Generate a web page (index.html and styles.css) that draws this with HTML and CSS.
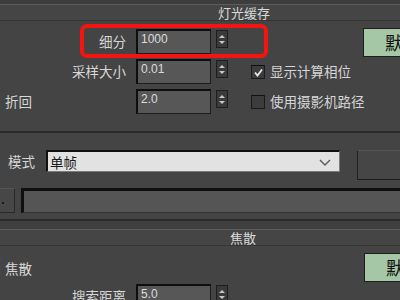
FILE: index.html
```html
<!DOCTYPE html>
<html lang="zh-CN">
<head>
<meta charset="utf-8">
<title>灯光缓存</title>
<link rel="stylesheet" href="styles.css">
</head>
<body>
<div class="topband"></div>
<div class="rhead"><span class="rtitle t1">灯光缓存</span></div>
<section class="panel lc">
  <div class="row">
    <label class="lbl">细分</label>
    <div class="num">1000</div>
    <div class="spin"><i class="up"></i><i class="dn"></i></div>
    <div class="green">默认</div>
  </div>
  <div class="row">
    <label class="lbl">采样大小</label>
    <div class="num">0.01</div>
    <div class="spin"><i class="up"></i><i class="dn"></i></div>
    <div class="chk on"><svg viewBox="0 0 11 11" width="11" height="11"><path d="M2 5.5 L4.5 8.5 L9 2.5" fill="none" stroke="#e8e8e8" stroke-width="1.8"/></svg></div>
    <span class="chktxt">显示计算相位</span>
  </div>
  <div class="row">
    <label class="lbl left">折回</label>
    <div class="num">2.0</div>
    <div class="spin"><i class="up"></i><i class="dn"></i></div>
    <div class="chk"></div>
    <span class="chktxt">使用摄影机路径</span>
  </div>
  <div class="highlight"></div>
</section>
<div class="sep"></div>
<section class="panel mode">
  <div class="mrow">
    <label class="mlbl">模式</label>
    <div class="drop"><span>单帧</span><svg class="chev" viewBox="0 0 12 7" width="12" height="7"><path d="M1 1 L6 6 L11 1" fill="none" stroke="#5a5a5a" stroke-width="1.4"/></svg></div>
    <div class="btn"></div>
  </div>
  <div class="frow">
    <div class="sbtn"><i></i></div>
    <div class="field"></div>
  </div>
</section>
<div class="sep"></div>
<div class="gapband"></div>
<div class="rhead"><span class="rtitle t2">焦散</span></div>
<section class="panel caus">
  <div class="crow">
    <label class="clbl">焦散</label>
    <div class="green g2">默认</div>
  </div>
  <div class="row">
    <label class="lbl">搜索距离</label>
    <div class="num">5.0</div>
    <div class="spin"><i class="up"></i><i class="dn"></i></div>
  </div>
</section>
</body>
</html>
```

FILE: styles.css
```css
html, body {
  margin: 0;
  padding: 0;
}
body {
  width: 400px;
  height: 300px;
  overflow: hidden;
  background: #444444;
  font-family: "Noto Sans CJK SC", "Noto Sans", sans-serif;
  color: #d6d6d6;
}
.topband {
  height: 4px;
  background: #3d3d3d;
}
.rhead {
  height: 15px;
  border-top: 1px solid #5c5c5c;
  border-bottom: 1px solid #353535;
  background: #454545;
  font-size: 13px;
  line-height: 15px;
  white-space: nowrap;
}
.rtitle {
  display: inline-block;
  color: #dadada;
}
.t1 { padding-left: 218px; }
.t2 { padding-left: 230px; }
.panel {
  position: relative;
  white-space: nowrap;
}
.lc {
  padding-top: 8px;
  padding-bottom: 12px;
}
.row {
  display: flex;
  align-items: flex-start;
  height: 25px;
  margin-bottom: 5px;
}
.lbl {
  width: 126px;
  flex: none;
  text-align: right;
  font-size: 13.5px;
  line-height: 25px;
  margin-right: 10px;
}
.lbl.left {
  text-align: left;
  padding-left: 5px;
  width: 121px;
}
.num {
  box-sizing: border-box;
  width: 75px;
  height: 25px;
  flex: none;
  background: #575757;
  border: 1px solid #1c1c1c;
  border-left: 2px solid #0e0e0e;
  border-top: 2px solid #0e0e0e;
  font-family: "Liberation Sans", Arial, sans-serif;
  font-size: 12px;
  line-height: 16px;
  padding-left: 3px;
  color: #dcdcdc;
}
.spin {
  box-sizing: border-box;
  width: 12px;
  height: 18px;
  margin-left: 5px;
  margin-top: 1px;
  flex: none;
  background: #3a3a3a;
  border: 1px solid #1e1e1e;
  display: flex;
  flex-direction: column;
  align-items: center;
  justify-content: space-around;
  padding: 2px 0;
}
.spin i {
  display: block;
  width: 0;
  height: 0;
  border-left: 3px solid transparent;
  border-right: 3px solid transparent;
}
.spin .up { border-bottom: 3px solid #c8c8c8; }
.spin .dn { border-top: 3px solid #c8c8c8; }
.chk {
  box-sizing: border-box;
  width: 14px;
  height: 14px;
  margin-left: 23px;
  margin-top: 6px;
  flex: none;
  background: #3c3c3c;
  border: 1px solid #1a1a1a;
  border-top-color: #111;
  display: flex;
  align-items: center;
  justify-content: center;
}
.chktxt {
  margin-left: 5px;
  font-size: 13.5px;
  line-height: 25px;
}
.green {
  box-sizing: border-box;
  height: 29px;
  width: 60px;
  flex: none;
  margin-left: 135px;
  margin-top: -1px;
  margin-bottom: -3px;
  background: #a6c7a6;
  border: 1px solid #1e1e1e;
  border-right: none;
  color: #111;
  font-size: 18px;
  line-height: 26px;
  padding-left: 21px;
  overflow: hidden;
}
.highlight {
  position: absolute;
  left: 80px;
  top: 3px;
  width: 188px;
  height: 34px;
  box-sizing: border-box;
  border: 4px solid #f5140f;
  border-radius: 7px;
}
.sep {
  height: 2px;
  background: #2a2a2a;
}
.mode {
  padding-top: 17px;
  padding-bottom: 6px;
}
.mrow {
  display: flex;
  align-items: flex-start;
  height: 30px;
}
.mlbl {
  width: 38px;
  padding-left: 8px;
  flex: none;
  font-size: 13.5px;
  line-height: 22px;
}
.drop {
  box-sizing: border-box;
  width: 294px;
  height: 22px;
  flex: none;
  background: #e2e2e2;
  border: 1px solid #7a7a7a;
  border-left: 2px solid #111;
  border-top: 2px solid #111;
  display: flex;
  align-items: center;
  justify-content: space-between;
  padding: 0 8px 0 2px;
  color: #1a1a1a;
  font-size: 13.5px;
}
.chev { margin-top: 1px; }
.btn {
  box-sizing: border-box;
  width: 50px;
  height: 30px;
  flex: none;
  margin-left: 17px;
  background: #464646;
  border-top: 1px solid #555;
  border-left: 1px solid #222;
  border-bottom: 1px solid #1e1e1e;
}
.frow {
  display: flex;
  margin-top: 8px;
  height: 25px;
}
.sbtn {
  box-sizing: border-box;
  width: 15px;
  height: 25px;
  flex: none;
  background: #474747;
  border-right: 1px solid #2a2a2a;
  border-bottom: 1px solid #2a2a2a;
  border-top: 1px solid #555;
  position: relative;
}
.sbtn i {
  position: absolute;
  left: 2px;
  top: 13px;
  width: 2px;
  height: 2px;
  background: #1a1a1a;
}
.field {
  box-sizing: border-box;
  flex: 1;
  margin-left: 6px;
  height: 25px;
  background: #555555;
  border-left: 3px solid #0f0f0f;
  border-top: 3px solid #0f0f0f;
  border-bottom: 1px solid #333;
}
.gapband {
  height: 8px;
  background: #404040;
}
.caus {
  padding-top: 7px;
}
.crow {
  display: flex;
  align-items: center;
  height: 29px;
  margin-bottom: 2px;
}
.clbl {
  width: 359px;
  padding-left: 5px;
  flex: none;
  font-size: 13.5px;
}
.green.g2 {
  margin: 0;
}
```
